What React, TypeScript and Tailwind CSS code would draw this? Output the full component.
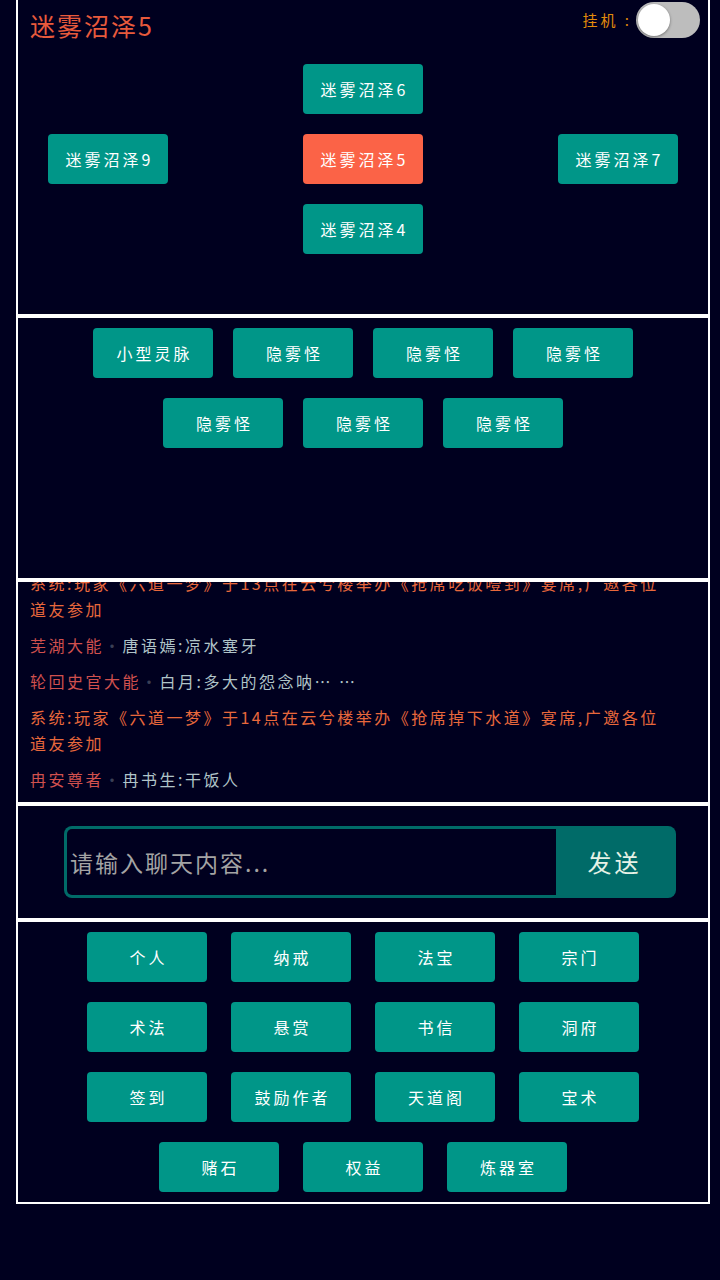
import React from 'react';

const neighbours = ['迷雾沼泽9', '迷雾沼泽5', '迷雾沼泽7'];
const monsters = ['小型灵脉', '隐雾怪', '隐雾怪', '隐雾怪', '隐雾怪', '隐雾怪', '隐雾怪'];
const menu = ['个人', '纳戒', '法宝', '宗门', '术法', '悬赏', '书信', '洞府', '签到', '鼓励作者', '天道阁', '宝术', '赌石', '权益', '炼器室'];

type Msg = { system?: string; name?: string; text?: string };

const messages: Msg[] = [
  { system: '系统:玩家《六道一梦》于13点在云兮楼举办《抢席吃饭噎到》宴席,广邀各位道友参加' },
  { name: '芜湖大能', text: '唐语嫣:凉水塞牙' },
  { name: '轮回史官大能', text: '白月:多大的怨念呐… …' },
  { system: '系统:玩家《六道一梦》于14点在云兮楼举办《抢席掉下水道》宴席,广邀各位道友参加' },
  { name: '冉安尊者', text: '冉书生:干饭人' },
];

function Btn({ label, active, className = '' }: { label: string; active?: boolean; className?: string }) {
  return (
    <button
      className={`w-[120px] h-[50px] rounded-[4px] flex items-center justify-center pl-[3px] text-[16px] tracking-[3px] text-white ${
        active ? 'bg-[#fb6347]' : 'bg-[#009688]'
      } ${className}`}
    >
      {label}
    </button>
  );
}

export default function App() {
  return (
    <div className="min-h-screen bg-[#00001f] font-['Noto_Sans_CJK_SC','Noto_Sans',sans-serif]">
      <div className="w-[694px] ml-[16px]">
        {/* Map */}
        <section className="h-[316px] border-2 border-t-0 border-white">
          <div className="h-[64px] flex justify-between items-start">
            <h1 className="pl-[12px] pt-[7px] text-[25px] leading-[36px] tracking-[2px] text-[#e85a3c]">迷雾沼泽5</h1>
            <div className="flex items-center pt-[2px] pr-[8px]">
              <span className="text-[15px] tracking-[3px] text-[#e38b0b] mr-[4px]">挂机 :</span>
              <div className="w-[64px] h-[36px] rounded-full bg-[#bdbdbd] p-[2px]">
                <div className="w-[32px] h-[32px] rounded-full bg-white shadow-[0_1px_3px_rgba(0,0,0,0.4)]" />
              </div>
            </div>
          </div>
          <div className="flex flex-col gap-[20px]">
            <div className="flex justify-center">
              <Btn label="迷雾沼泽6" />
            </div>
            <div className="flex justify-between px-[30px]">
              {neighbours.map((n) => (
                <Btn key={n} label={n} active={n === '迷雾沼泽5'} />
              ))}
            </div>
            <div className="flex justify-center">
              <Btn label="迷雾沼泽4" />
            </div>
          </div>
        </section>

        {/* Monsters */}
        <section className="h-[264px] border-2 border-white flex flex-wrap justify-center content-start">
          {monsters.map((m, i) => (
            <Btn key={i} label={m} className="m-[10px]" />
          ))}
        </section>

        {/* Chat log */}
        <section className="h-[224px] border-2 border-white overflow-hidden flex flex-col justify-end gap-[10px] pl-[12px] pr-[40px] pb-[10px]">
          {messages.map((m, i) =>
            m.system ? (
              <p key={i} className="text-[16px] leading-[26px] tracking-[2.5px] text-[#e8683c]">
                {m.system}
              </p>
            ) : (
              <p key={i} className="text-[16px] leading-[26px] tracking-[2.5px]">
                <span className="text-[#d0504e]">{m.name}</span>
                <span className="text-[#3a3f55]">·</span>
                <span className="text-[#b0c4c8]">{m.text}</span>
              </p>
            )
          )}
        </section>

        {/* Input */}
        <section className="h-[116px] border-2 border-white flex items-center">
          <div className="ml-[46px] w-[612px] h-[72px] rounded-[8px] bg-[#006b68] p-[3px] flex">
            <input
              className="flex-1 min-w-0 bg-[#00001f] rounded-l-[5px] pl-[3px] text-[23px] tracking-[2px] text-[#ddd] placeholder:text-[#a4a4a4] outline-none"
              placeholder="请输入聊天内容..."
            />
            <button className="w-[117px] text-[24px] tracking-[3px] text-[#e6f2e6]">发送</button>
          </div>
        </section>

        {/* Menu */}
        <section className="h-[284px] border-2 border-white flex flex-wrap justify-center content-start">
          {menu.map((m) => (
            <Btn key={m} label={m} className="my-[10px] mx-[12px]" />
          ))}
        </section>
      </div>
    </div>
  );
}
